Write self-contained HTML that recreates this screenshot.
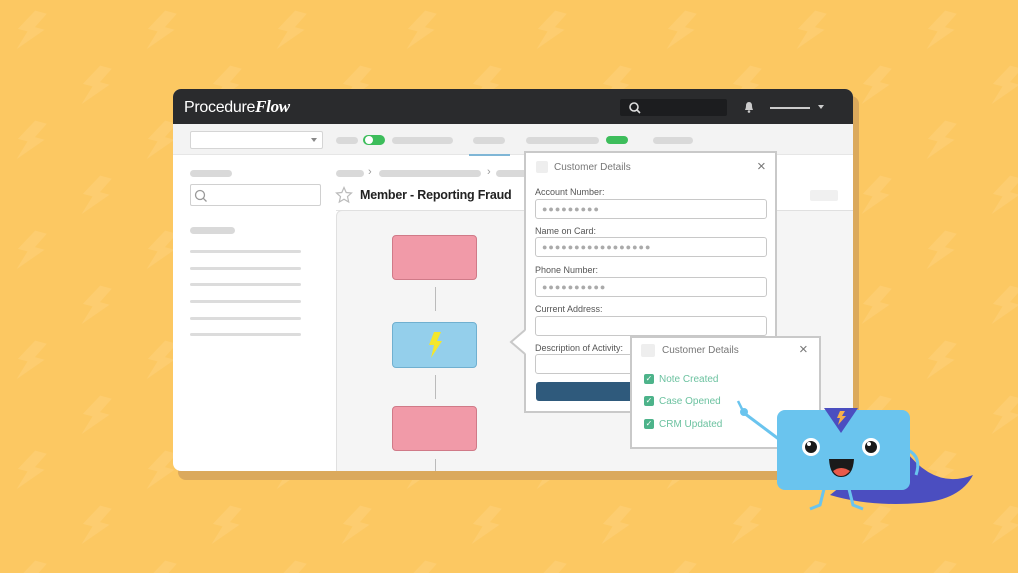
<!DOCTYPE html>
<html><head><meta charset="utf-8"><style>
*{margin:0;padding:0;box-sizing:border-box}
body{width:1018px;height:573px;overflow:hidden;background:#fcc862;font-family:"Liberation Sans",sans-serif;position:relative}
.a{position:absolute}
.pill{position:absolute;height:7px;border-radius:4px;background:#d9d9d9}
.ln{position:absolute;height:3px;background:#dcdcdc;border-radius:2px}
.lbl{position:absolute;font-size:9px;color:#555}
.inp{position:absolute;height:20px;border:1px solid #c8c8c8;border-radius:3px;background:#fff;font-size:9px;color:#aaa;padding-left:6px;line-height:18px;letter-spacing:1px}
.chk{position:absolute;width:10px;height:10px;background:#4db38a;border-radius:2px;color:#fff;font-size:8px;line-height:10px;text-align:center}
.ct{position:absolute;font-size:10px;color:#6cc2a0}
</style></head><body>
<svg class="a" style="left:0;top:0" width="1018" height="573">
<defs><pattern id="p" width="130" height="110" patternUnits="userSpaceOnUse">
<path d="M30 10 L42 10 L34 26 L44 26 L22 52 L28 32 L18 32 Z" fill="#fdd07a" opacity=".6" transform="rotate(15 30 30)"/>
<path d="M95 65 L107 65 L99 81 L109 81 L87 107 L93 87 L83 87 Z" fill="#fdd07a" opacity=".6" transform="rotate(15 95 85)"/>
</pattern></defs>
<rect width="1018" height="573" fill="url(#p)"/>
</svg>
<div class="a" style="left:178px;top:96px;width:681px;height:384px;background:#dba95c;border-radius:8px"></div>
<div class="a" style="left:173px;top:89px;width:680px;height:382px;background:#fff;border-radius:8px;overflow:hidden">
 <div class="a" style="left:0;top:0;width:680px;height:35px;background:#2a2b2d"></div>
 <div class="a" style="left:11px;top:8px;color:#fff;font-size:16px;letter-spacing:-0.3px">Procedure<i style="font-family:'Liberation Serif',serif;font-weight:bold;font-size:17px">Flow</i></div>
 <div class="a" style="left:447px;top:10px;width:107px;height:17px;background:#1c1d1f;border-radius:2px"></div>
 <svg class="a" style="left:455px;top:12px" width="14" height="14"><circle cx="6" cy="6" r="4" stroke="#ddd" stroke-width="1.6" fill="none"/><path d="M9 9 L12 12" stroke="#ddd" stroke-width="1.6"/></svg>
 <svg class="a" style="left:569px;top:11px" width="14" height="14"><path d="M3 10 Q4 8 4 6 Q4 2 7 2 Q10 2 10 6 Q10 8 11 10 Z" fill="#ccc"/><circle cx="7" cy="11.5" r="1.3" fill="#ccc"/></svg>
 <div class="a" style="left:597px;top:18px;width:40px;height:2px;background:#ccc"></div>
 <div class="a" style="left:645px;top:16px;border:3.5px solid transparent;border-top:4px solid #ccc"></div>
 <div class="a" style="left:0;top:35px;width:680px;height:31px;background:#f3f3f3;border-bottom:1px solid #e6e6e6"></div>
 <div class="a" style="left:17px;top:42px;width:133px;height:18px;background:#fff;border:1px solid #d5d5d5;border-radius:2px"></div>
 <div class="a" style="left:138px;top:49px;border:3px solid transparent;border-top:4px solid #888"></div>
 <div class="pill" style="left:163px;top:48px;width:22px"></div>
 <div class="a" style="left:190px;top:46px;width:22px;height:10px;background:#3dbd5b;border-radius:5px"><div class="a" style="left:2px;top:1px;width:8px;height:8px;background:#fff;border-radius:4px"></div></div>
 <div class="pill" style="left:219px;top:48px;width:61px"></div>
 <div class="pill" style="left:300px;top:48px;width:32px"></div>
 <div class="a" style="left:296px;top:65px;width:41px;height:2px;background:#7fb6d6"></div>
 <div class="pill" style="left:353px;top:48px;width:73px"></div>
 <div class="a" style="left:433px;top:47px;width:22px;height:8px;background:#3dbd5b;border-radius:4px"></div>
 <div class="pill" style="left:480px;top:48px;width:40px"></div>
 <div class="pill" style="left:17px;top:81px;width:42px"></div>
 <div class="a" style="left:17px;top:95px;width:131px;height:22px;border:1px solid #d0d0d0;border-radius:2px"></div>
 <svg class="a" style="left:21px;top:100px" width="14" height="14"><circle cx="6" cy="6" r="4.5" stroke="#999" stroke-width="1.3" fill="none"/><path d="M9.3 9.3 L12.5 12.5" stroke="#999" stroke-width="1.3"/></svg>
 <div class="pill" style="left:17px;top:138px;width:45px"></div>
 <div class="ln" style="left:17px;top:161px;width:111px"></div>
 <div class="ln" style="left:17px;top:178px;width:111px"></div>
 <div class="ln" style="left:17px;top:194px;width:111px"></div>
 <div class="ln" style="left:17px;top:211px;width:111px"></div>
 <div class="ln" style="left:17px;top:228px;width:111px"></div>
 <div class="ln" style="left:17px;top:244px;width:111px"></div>
 <div class="pill" style="left:163px;top:81px;width:28px"></div>
 <div class="a" style="left:195px;top:77px;font-size:11px;color:#999">›</div>
 <div class="pill" style="left:206px;top:81px;width:102px"></div>
 <div class="a" style="left:314px;top:77px;font-size:11px;color:#999">›</div>
 <div class="pill" style="left:323px;top:81px;width:40px"></div>
 <svg class="a" style="left:162px;top:97px" width="18" height="18"><path d="M9 1.5 L11.2 6.5 L16.5 7 L12.5 10.6 L13.7 16 L9 13.2 L4.3 16 L5.5 10.6 L1.5 7 L6.8 6.5 Z" fill="none" stroke="#bbb" stroke-width="1.2"/></svg>
 <div class="a" style="left:187px;top:99px;font-size:12.5px;font-weight:bold;color:#222;letter-spacing:-0.2px">Member - Reporting Fraud</div>
 <div class="a" style="left:637px;top:101px;width:28px;height:11px;background:#f0f0f0;border-radius:2px"></div>
 <div class="a" style="left:163px;top:121px;width:517px;height:1px;background:#e3e3e3"></div>
 <div class="a" style="left:163px;top:121px;width:530px;height:270px;background:#f5f5f5;border:1px solid #e0e0e0;border-radius:6px 0 0 0"></div>
 <div class="a" style="left:219px;top:146px;width:85px;height:45px;background:#f19aa8;border:1px solid #d07a88;border-radius:4px"></div>
 <div class="a" style="left:262px;top:198px;width:1px;height:24px;background:#bbb"></div>
 <div class="a" style="left:219px;top:233px;width:85px;height:46px;background:#94cfeb;border:1px solid #70b0d0;border-radius:4px"></div>
 <svg class="a" style="left:252px;top:241px" width="20" height="30"><path d="M9 2 L16 2 L12 11 L17 11 L6 28 L9 15 L4 15 Z" fill="#f4e72a"/></svg>
 <div class="a" style="left:262px;top:286px;width:1px;height:24px;background:#bbb"></div>
 <div class="a" style="left:219px;top:317px;width:85px;height:45px;background:#f19aa8;border:1px solid #d07a88;border-radius:4px"></div>
 <div class="a" style="left:262px;top:370px;width:1px;height:15px;background:#bbb"></div>
</div>
<div class="a" style="left:524px;top:151px;width:253px;height:262px;background:#fff;border:2px solid #c9c9c9"></div>
<svg class="a" style="left:508px;top:329px" width="20" height="26"><path d="M18 1 L18 25 L3 13 Z" fill="#fff"/><path d="M17 1 L3 13 L17 25" fill="none" stroke="#c9c9c9" stroke-width="2"/></svg>
<div class="a" style="left:536px;top:161px;width:12px;height:12px;background:#eee;border-radius:2px"></div>
<div class="a" style="left:554px;top:162px;font-size:10px;color:#777">Customer Details</div>
<div class="a" style="left:757px;top:158px;font-size:15px;color:#777">×</div>
<div class="lbl" style="left:535px;top:187px">Account Number:</div>
<div class="inp" style="left:535px;top:199px;width:232px">●●●●●●●●●</div>
<div class="lbl" style="left:535px;top:226px">Name on Card:</div>
<div class="inp" style="left:535px;top:237px;width:232px">●●●●●●●●●●●●●●●●●</div>
<div class="lbl" style="left:535px;top:265px">Phone Number:</div>
<div class="inp" style="left:535px;top:277px;width:232px">●●●●●●●●●●</div>
<div class="lbl" style="left:535px;top:304px">Current Address:</div>
<div class="inp" style="left:535px;top:316px;width:232px"></div>
<div class="lbl" style="left:535px;top:343px">Description of Activity:</div>
<div class="inp" style="left:535px;top:354px;width:232px"></div>
<div class="a" style="left:536px;top:382px;width:200px;height:19px;background:#2f5a7c;border-radius:3px"></div>
<div class="a" style="left:630px;top:336px;width:191px;height:113px;background:#fff;border:2px solid #c9c9c9"></div>
<div class="a" style="left:641px;top:344px;width:14px;height:13px;background:#eee;border-radius:2px"></div>
<div class="a" style="left:662px;top:345px;font-size:10px;color:#777">Customer Details</div>
<div class="a" style="left:799px;top:341px;font-size:15px;color:#777">×</div>
<div class="chk" style="left:644px;top:374px">✓</div><div class="ct" style="left:659px;top:374px">Note Created</div>
<div class="chk" style="left:644px;top:396px">✓</div><div class="ct" style="left:659px;top:396px">Case Opened</div>
<div class="chk" style="left:644px;top:419px">✓</div><div class="ct" style="left:659px;top:419px">CRM Updated</div>
<svg class="a" style="left:730px;top:395px" width="250" height="125">
<path d="M175 55 Q205 95 243 80 Q230 105 190 108 Q140 112 100 100 L150 60 Z" fill="#4b4ec0"/>
<path d="M178 55 Q192 62 186 80" stroke="#6ac4ee" stroke-width="3" fill="none"/>
<path d="M50 45 L14 18" stroke="#6ac4ee" stroke-width="3"/>
<circle cx="14" cy="17" r="4" fill="#6ac4ee"/><path d="M12 14 L8 6" stroke="#6ac4ee" stroke-width="2.5"/>
<path d="M95 90 L90 110 L80 114" stroke="#6ac4ee" stroke-width="3" fill="none"/>
<path d="M118 90 L123 110 L133 114" stroke="#6ac4ee" stroke-width="3" fill="none"/>
<rect x="47" y="15" width="133" height="80" rx="8" fill="#6ac4ee"/>
<path d="M94 13 L128 13 L111 38 Z" fill="#4b4ec0"/>
<path d="M110 16 L115 16 L112 21 L116 21 L108 30 L110 23 L107 23 Z" fill="#f6b04c"/>
<circle cx="81" cy="52" r="9" fill="#fff"/><circle cx="81" cy="52" r="6" fill="#1a1a1a"/><circle cx="79" cy="49" r="2" fill="#fff"/>
<circle cx="141" cy="52" r="9" fill="#fff"/><circle cx="141" cy="52" r="6" fill="#1a1a1a"/><circle cx="139" cy="49" r="2" fill="#fff"/>
<path d="M99 64 L124 64 Q123 82 111 82 Q100 82 99 64 Z" fill="#1a1a1a"/><path d="M103 76 Q111 70 120 76 Q116 81 111 81 Q106 81 103 76 Z" fill="#e85a4a"/>
</svg>
</body></html>
